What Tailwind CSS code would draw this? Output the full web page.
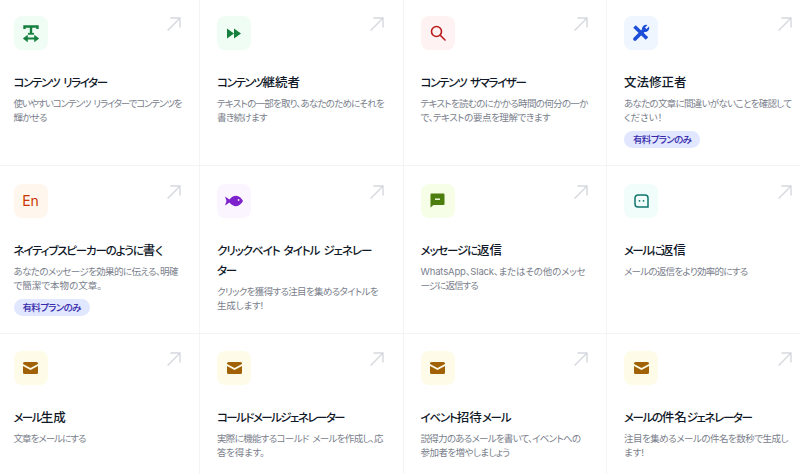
<!DOCTYPE html>
<html lang="ja">
<head>
  <meta charset="UTF-8">
  <title>AI ツール</title>
  <script src="https://cdn.jsdelivr.net/npm/@tailwindcss/browser@4"></script>
</head>
<body class="bg-white overflow-hidden h-[474px] font-['Inter','Noto_Sans_CJK_JP',sans-serif] [font-feature-settings:'palt']">
 <div class="h-[474px] w-[800px] overflow-hidden">

  <div class="grid grid-cols-4 auto-rows-[167.5px] w-[814px] -ml-[3.5px] -mt-[1.5px]">

    <!-- row 1 -->
    <div class="border-r border-b border-gray-100 pt-[17.5px] pl-[17px] pr-[18.5px] whitespace-nowrap">
      <div class="flex justify-between items-start h-[34px]">
        <div class="w-[34px] h-[34px] rounded-lg bg-green-50 flex items-center justify-center">
          <svg class="w-[18px] h-[18px]" viewBox="0 0 18 18" fill="none" stroke="#15803d"><path d="M2.500 5V2.500h13V5M9 2.500V10" stroke-width="2.400"/><path d="M6 9.800h6" stroke-width="1.800"/><path d="M4 14.500h10" stroke-width="2"/><path d="M5.500 11.300 1.200 14.500l4.300 3.200zM12.500 11.300l4.300 3.200-4.300 3.200z" fill="#15803d" stroke-width=".6"/></svg>
        </div>
        <svg class="w-[14px] h-[14px] mt-px" viewBox="0 0 14 14" fill="none" stroke="#d5d8de" stroke-width="1.400"><path d="M.6 13.400 13 1M3.400 1H13v9.600"/></svg>
      </div>
      <h3 class="mt-[23px] text-[11.5px] leading-[20px] font-medium text-gray-900 tracking-[-1.33px] [word-spacing:2px]">コンテンツ リライター</h3>
      <p class="mt-[4px] text-[9.5px] leading-[14px] text-[#7a808c]">
        <span class="block tracking-[-1.15px] [word-spacing:1.5px]">使いやすいコンテンツ リライターでコンテンツを</span>
        <span class="block tracking-[-0.78px]">輝かせる</span>
      </p>
    </div>

    <div class="border-r border-b border-gray-100 pt-[17.5px] pl-[17px] pr-[18.5px] whitespace-nowrap">
      <div class="flex justify-between items-start h-[34px]">
        <div class="w-[34px] h-[34px] rounded-lg bg-green-50 flex items-center justify-center">
          <svg class="w-[14px] h-[11px]" viewBox="0 0 14 11" fill="#15803d"><path d="M0 .5 7 5.500 0 10.500zM7 .5l7 5-7 5z"/></svg>
        </div>
        <svg class="w-[14px] h-[14px] mt-px" viewBox="0 0 14 14" fill="none" stroke="#d5d8de" stroke-width="1.400"><path d="M.6 13.400 13 1M3.400 1H13v9.600"/></svg>
      </div>
      <h3 class="mt-[23px] text-[11.5px] leading-[20px] font-medium text-gray-900 tracking-[-1.36px]">コンテンツ<span class="text-[12.5px] tracking-normal">継続者</span></h3>
      <p class="mt-[4px] text-[9.5px] leading-[14px] text-[#7a808c]">
        <span class="block tracking-[-0.76px]">テキストの一部を取り、あなたのためにそれを</span>
        <span class="block tracking-[-0.67px]">書き続けます</span>
      </p>
    </div>

    <div class="border-r border-b border-gray-100 pt-[17.5px] pl-[17px] pr-[18.5px] whitespace-nowrap">
      <div class="flex justify-between items-start h-[34px]">
        <div class="w-[34px] h-[34px] rounded-lg bg-red-50 flex items-center justify-center">
          <svg class="w-[16px] h-[16px]" viewBox="0 0 16 16" fill="none" stroke="#b91c1c" stroke-width="1.600"><circle cx="6.500" cy="6.500" r="5"/><path d="m10.300 10.300 4.700 4.700" stroke-linecap="round"/></svg>
        </div>
        <svg class="w-[14px] h-[14px] mt-px" viewBox="0 0 14 14" fill="none" stroke="#d5d8de" stroke-width="1.400"><path d="M.6 13.400 13 1M3.400 1H13v9.600"/></svg>
      </div>
      <h3 class="mt-[23px] text-[11.5px] leading-[20px] font-medium text-gray-900 tracking-[-1.33px] [word-spacing:2px]">コンテンツ サマライザー</h3>
      <p class="mt-[4px] text-[9.5px] leading-[14px] text-[#7a808c]">
        <span class="block tracking-[-0.67px]">テキストを読むのにかかる時間の何分の一か</span>
        <span class="block tracking-[-0.43px]">で、テキストの要点を理解できます</span>
      </p>
    </div>

    <div class="border-b border-gray-100 pt-[17.5px] pl-[17px] pr-[18.5px] whitespace-nowrap">
      <div class="flex justify-between items-start h-[34px] w-[168px]">
        <div class="w-[34px] h-[34px] rounded-lg bg-blue-50 flex items-center justify-center">
          <svg class="w-[18px] h-[18px]" viewBox="0 0 18 18" fill="none" stroke="#1d4ed8"><path d="M2.500 2.500 15 14.500" stroke-width="3.600"/><path d="M3 15 11.500 6.500" stroke-width="3.800" stroke-linecap="round"/><path fill="#1d4ed8" stroke="none" d="M10 5.500a4.200 4.200 0 0 1 5.500-4.500l-2.500 2.500 1.500 1.500 2.500-2.500a4.200 4.200 0 0 1-4.500 5.500z"/></svg>
        </div>
        <svg class="w-[14px] h-[14px] mt-px" viewBox="0 0 14 14" fill="none" stroke="#d5d8de" stroke-width="1.400"><path d="M.6 13.400 13 1M3.400 1H13v9.600"/></svg>
      </div>
      <h3 class="mt-[23px] text-[12.5px] leading-[20px] font-medium text-gray-900">文法修正者</h3>
      <p class="mt-[4px] text-[9.5px] leading-[14px] text-[#7a808c]">
        <span class="block tracking-[-0.7px]">あなたの文章に間違いがないことを確認して</span>
        <span class="block">ください！</span>
      </p>
      <span class="inline-block mt-[4px] h-[17px] px-[9px] rounded-full bg-indigo-100 text-[9.5px] leading-[17px] font-medium text-indigo-800 tracking-[-0.65px]">有料プランのみ</span>
    </div>

    <!-- row 2 -->
    <div class="border-r border-b border-gray-100 pt-[17.5px] pl-[17px] pr-[18.5px] whitespace-nowrap">
      <div class="flex justify-between items-start h-[34px]">
        <div class="w-[34px] h-[34px] rounded-lg bg-orange-50 flex items-center justify-center text-[14px] text-orange-700">En</div>
        <svg class="w-[14px] h-[14px] mt-px" viewBox="0 0 14 14" fill="none" stroke="#d5d8de" stroke-width="1.400"><path d="M.6 13.400 13 1M3.400 1H13v9.600"/></svg>
      </div>
      <h3 class="mt-[23px] text-[11.5px] leading-[20px] font-medium text-gray-900 tracking-[-1.18px]">ネイティブスピーカーのように<span class="text-[12.5px] tracking-normal">書</span>く</h3>
      <p class="mt-[4px] text-[9.5px] leading-[14px] text-[#7a808c]">
        <span class="block tracking-[-0.61px]">あなたのメッセージを効果的に伝える、明確</span>
        <span class="block">で簡潔で本物の文章。</span>
      </p>
      <span class="inline-block mt-[4px] h-[17px] px-[9px] rounded-full bg-indigo-100 text-[9.5px] leading-[17px] font-medium text-indigo-800 tracking-[-0.65px]">有料プランのみ</span>
    </div>

    <div class="border-r border-b border-gray-100 pt-[17.5px] pl-[17px] pr-[18.5px] whitespace-nowrap">
      <div class="flex justify-between items-start h-[34px]">
        <div class="w-[34px] h-[34px] rounded-lg bg-purple-50 flex items-center justify-center">
          <svg class="w-[18px] h-[12px]" viewBox="0 0 18 12" fill="#7e22ce"><path d="M0 1.500 4.500 4.500C6.500 1.800 9 .8 11 .8c3 0 5.500 2.500 7 5.200-1.500 2.700-4 5.200-7 5.200-2 0-4.500-1-6.500-3.700L0 10.500 1.500 6z"/><circle cx="13.600" cy="5" r=".9" fill="#faf5ff"/></svg>
        </div>
        <svg class="w-[14px] h-[14px] mt-px" viewBox="0 0 14 14" fill="none" stroke="#d5d8de" stroke-width="1.400"><path d="M.6 13.400 13 1M3.400 1H13v9.600"/></svg>
      </div>
      <h3 class="mt-[23px] text-[11.5px] leading-[20px] font-medium text-gray-900 tracking-[-1.03px] [word-spacing:2px]">クリックベイト タイトル ジェネレー<span class="block tracking-[-1.2px]">ター</span></h3>
      <p class="mt-[4px] text-[9.5px] leading-[14px] text-[#7a808c]">
        <span class="block tracking-[-0.66px]">クリックを獲得する注目を集めるタイトルを</span>
        <span class="block tracking-[-0.18px]">生成します!</span>
      </p>
    </div>

    <div class="border-r border-b border-gray-100 pt-[17.5px] pl-[17px] pr-[18.5px] whitespace-nowrap">
      <div class="flex justify-between items-start h-[34px]">
        <div class="w-[34px] h-[34px] rounded-lg bg-lime-50 flex items-center justify-center">
          <svg class="w-[15px] h-[15px]" viewBox="0 0 15 15"><path fill="#4d7c0f" d="M.5 1.500a1 1 0 0 1 1-1h12a1 1 0 0 1 1 1v9.500a1 1 0 0 1-1 1H3.500L.5 14.500z"/><path fill="#f7fee7" d="M5 5.500h5v1.400H5z"/></svg>
        </div>
        <svg class="w-[14px] h-[14px] mt-px" viewBox="0 0 14 14" fill="none" stroke="#d5d8de" stroke-width="1.400"><path d="M.6 13.400 13 1M3.400 1H13v9.600"/></svg>
      </div>
      <h3 class="mt-[23px] text-[11.5px] leading-[20px] font-medium text-gray-900 tracking-[-1.15px]">メッセージに<span class="text-[12.5px] tracking-normal">返信</span></h3>
      <p class="mt-[4px] text-[9.5px] leading-[14px] text-[#7a808c]">
        <span class="block tracking-[-0.16px]">WhatsApp、Slack、またはその他のメッセ</span>
        <span class="block tracking-[-0.91px]">ージに返信する</span>
      </p>
    </div>

    <div class="border-b border-gray-100 pt-[17.5px] pl-[17px] pr-[18.5px] whitespace-nowrap">
      <div class="flex justify-between items-start h-[34px] w-[168px]">
        <div class="w-[34px] h-[34px] rounded-lg bg-teal-50 flex items-center justify-center">
          <svg class="w-[15px] h-[14px]" viewBox="0 0 15 14" fill="none"><path stroke="#0f766e" stroke-width="1.500" d="M4 1h7a3 3 0 0 1 3 3v9H4a3 3 0 0 1-3-3V4a3 3 0 0 1 3-3z"/><circle cx="5.500" cy="6.800" r=".9" fill="#0f766e"/><circle cx="9.500" cy="6.800" r=".9" fill="#0f766e"/></svg>
        </div>
        <svg class="w-[14px] h-[14px] mt-px" viewBox="0 0 14 14" fill="none" stroke="#d5d8de" stroke-width="1.400"><path d="M.6 13.400 13 1M3.400 1H13v9.600"/></svg>
      </div>
      <h3 class="mt-[23px] text-[11.5px] leading-[20px] font-medium text-gray-900 tracking-[-1.6px]">メールに<span class="text-[12.5px] tracking-normal">返信</span></h3>
      <p class="mt-[4px] text-[9.5px] leading-[14px] text-[#7a808c] tracking-[-0.73px]">メールの返信をより効率的にする</p>
    </div>

    <!-- row 3 -->
    <div class="border-r border-gray-100 pt-[17.5px] pl-[17px] pr-[18.5px] whitespace-nowrap">
      <div class="flex justify-between items-start h-[34px]">
        <div class="w-[34px] h-[34px] rounded-lg bg-yellow-50 flex items-center justify-center">
          <svg class="w-[15px] h-[12px]" viewBox="0 0 15 12"><path fill="#a16207" d="M1.500 0h12A1.500 1.500 0 0 1 15 1.500V2L7.500 6 0 2v-.5A1.500 1.500 0 0 1 1.500 0zM0 4l7.500 4L15 4v6.500a1.500 1.500 0 0 1-1.500 1.500h-12A1.500 1.500 0 0 1 0 10.500z"/></svg>
        </div>
        <svg class="w-[14px] h-[14px] mt-px" viewBox="0 0 14 14" fill="none" stroke="#d5d8de" stroke-width="1.400"><path d="M.6 13.400 13 1M3.400 1H13v9.600"/></svg>
      </div>
      <h3 class="mt-[23px] text-[11.5px] leading-[20px] font-medium text-gray-900 tracking-[-1.6px]">メール<span class="text-[12.5px] tracking-normal">生成</span></h3>
      <p class="mt-[4px] text-[9.5px] leading-[14px] text-[#7a808c] tracking-[-0.97px]">文章をメールにする</p>
    </div>

    <div class="border-r border-gray-100 pt-[17.5px] pl-[17px] pr-[18.5px] whitespace-nowrap">
      <div class="flex justify-between items-start h-[34px]">
        <div class="w-[34px] h-[34px] rounded-lg bg-yellow-50 flex items-center justify-center">
          <svg class="w-[15px] h-[12px]" viewBox="0 0 15 12"><path fill="#a16207" d="M1.500 0h12A1.500 1.500 0 0 1 15 1.500V2L7.500 6 0 2v-.5A1.500 1.500 0 0 1 1.500 0zM0 4l7.500 4L15 4v6.500a1.500 1.500 0 0 1-1.500 1.500h-12A1.500 1.500 0 0 1 0 10.500z"/></svg>
        </div>
        <svg class="w-[14px] h-[14px] mt-px" viewBox="0 0 14 14" fill="none" stroke="#d5d8de" stroke-width="1.400"><path d="M.6 13.400 13 1M3.400 1H13v9.600"/></svg>
      </div>
      <h3 class="mt-[23px] text-[11.5px] leading-[20px] font-medium text-gray-900 tracking-[-1.56px]">コールドメールジェネレーター</h3>
      <p class="mt-[4px] text-[9.5px] leading-[14px] text-[#7a808c]">
        <span class="block tracking-[-0.67px] [word-spacing:1.5px]">実際に機能するコールド メールを作成し、応</span>
        <span class="block tracking-[-0.27px]">答を得ます。</span>
      </p>
    </div>

    <div class="border-r border-gray-100 pt-[17.5px] pl-[17px] pr-[18.5px] whitespace-nowrap">
      <div class="flex justify-between items-start h-[34px]">
        <div class="w-[34px] h-[34px] rounded-lg bg-yellow-50 flex items-center justify-center">
          <svg class="w-[15px] h-[12px]" viewBox="0 0 15 12"><path fill="#a16207" d="M1.500 0h12A1.500 1.500 0 0 1 15 1.500V2L7.500 6 0 2v-.5A1.500 1.500 0 0 1 1.500 0zM0 4l7.500 4L15 4v6.500a1.500 1.500 0 0 1-1.500 1.500h-12A1.500 1.500 0 0 1 0 10.500z"/></svg>
        </div>
        <svg class="w-[14px] h-[14px] mt-px" viewBox="0 0 14 14" fill="none" stroke="#d5d8de" stroke-width="1.400"><path d="M.6 13.400 13 1M3.400 1H13v9.600"/></svg>
      </div>
      <h3 class="mt-[23px] text-[11.5px] leading-[20px] font-medium text-gray-900 tracking-[-1.16px]">イベント<span class="text-[12.5px] tracking-normal">招待</span>メール</h3>
      <p class="mt-[4px] text-[9.5px] leading-[14px] text-[#7a808c]">
        <span class="block tracking-[-0.74px]">説得力のあるメールを書いて、イベントへの</span>
        <span class="block tracking-[-0.55px]">参加者を増やしましょう</span>
      </p>
    </div>

    <div class="pt-[17.5px] pl-[17px] pr-[18.5px] whitespace-nowrap">
      <div class="flex justify-between items-start h-[34px] w-[168px]">
        <div class="w-[34px] h-[34px] rounded-lg bg-yellow-50 flex items-center justify-center">
          <svg class="w-[15px] h-[12px]" viewBox="0 0 15 12"><path fill="#a16207" d="M1.500 0h12A1.500 1.500 0 0 1 15 1.500V2L7.500 6 0 2v-.5A1.500 1.500 0 0 1 1.500 0zM0 4l7.500 4L15 4v6.500a1.500 1.500 0 0 1-1.500 1.500h-12A1.500 1.500 0 0 1 0 10.500z"/></svg>
        </div>
        <svg class="w-[14px] h-[14px] mt-px" viewBox="0 0 14 14" fill="none" stroke="#d5d8de" stroke-width="1.400"><path d="M.6 13.400 13 1M3.400 1H13v9.600"/></svg>
      </div>
      <h3 class="mt-[23px] text-[11.5px] leading-[20px] font-medium text-gray-900 tracking-[-1.39px]">メールの<span class="text-[12.5px] tracking-normal">件名</span>ジェネレーター</h3>
      <p class="mt-[4px] text-[9.5px] leading-[14px] text-[#7a808c]">
        <span class="block tracking-[-0.5px]">注目を集めるメールの件名を数秒で生成し</span>
        <span class="block">ます!</span>
      </p>
    </div>

  </div>
 </div>
</body>
</html>
